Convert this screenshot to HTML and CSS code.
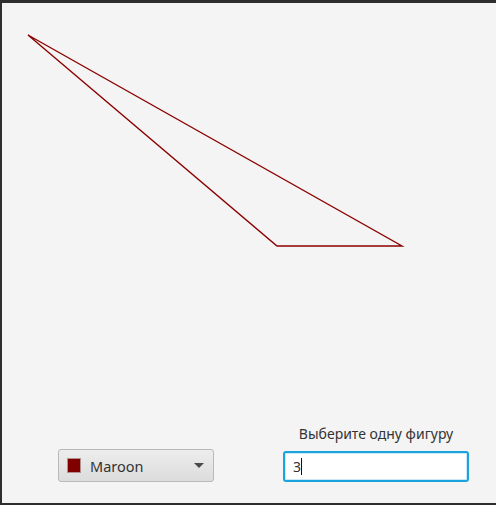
FILE: index.html
```html
<!DOCTYPE html>
<html>
<head>
<meta charset="utf-8">
<link rel="stylesheet" href="styles.css">
</head>
<body>
<div class="window">
  <div class="canvas">
    <svg class="drawing" width="494" height="420" viewBox="0 0 494 420">
      <polygon points="26,32 400,243 275,243" fill="none" stroke="#8b0000" stroke-width="1.4" stroke-linejoin="miter"/>
    </svg>
  </div>
  <div class="controls">
    <div class="combo">
      <span class="swatch"></span>
      <span class="combo-text">Maroon</span>
      <span class="arrow"></span>
    </div>
    <div class="field-group">
      <div class="label">Выберите одну фигуру</div>
      <div class="field"><span class="field-text">3</span><span class="caret"></span></div>
    </div>
  </div>
</div>
</body>
</html>
```
FILE: styles.css
```css
html, body {
  margin: 0;
  padding: 0;
  background: #2b2b2b;
}
body {
  width: 496px;
  height: 505px;
  overflow: hidden;
  font-family: "Noto Sans", "Open Sans", sans-serif;
}
.window {
  box-sizing: border-box;
  width: 496px;
  height: 505px;
  border-top: 3px solid #2e2e2e;
  border-left: 2px solid #2e2e2e;
  border-bottom: 2px solid #2e2e2e;
  background: #f4f4f4;
  display: flex;
  flex-direction: column;
}
.canvas {
  flex: 1;
  overflow: hidden;
}
.drawing {
  display: block;
}
.controls {
  display: flex;
  align-items: flex-end;
  padding: 0 0 21px 56px;
  gap: 69px;
}
.combo {
  box-sizing: border-box;
  width: 156px;
  height: 33px;
  border: 1px solid #b9b9b9;
  border-radius: 3px;
  background: linear-gradient(#ededed, #dcdcdc);
  display: flex;
  align-items: center;
  padding-left: 9px;
  padding-right: 9px;
}
.swatch {
  width: 12px;
  height: 13px;
  background: #800000;
  box-shadow: 0 0 0 1px #b1908e;
  margin-right: 10px;
}
.combo-text {
  flex: 1;
  font-size: 14.5px;
  color: #333;
  line-height: 18px;
}
.arrow {
  width: 0;
  height: 0;
  border-left: 5px solid transparent;
  border-right: 5px solid transparent;
  border-top: 5px solid #4a4a4a;
}
.field-group {
  display: flex;
  flex-direction: column;
  align-items: center;
  gap: 8px;
}
.label {
  font-size: 14px;
  color: #333;
  line-height: 19px;
}
.field {
  box-sizing: border-box;
  width: 186px;
  height: 31px;
  background: #fff;
  border: 2px solid #1aa3dd;
  border-radius: 3px;
  box-shadow: inset 0 0 0 1px #c9e9f6;
  display: flex;
  align-items: center;
  padding-left: 8px;
}
.field-text {
  font-size: 14px;
  color: #333;
  line-height: 18px;
}
.caret {
  width: 1px;
  height: 17px;
  background: #111;
}
```
